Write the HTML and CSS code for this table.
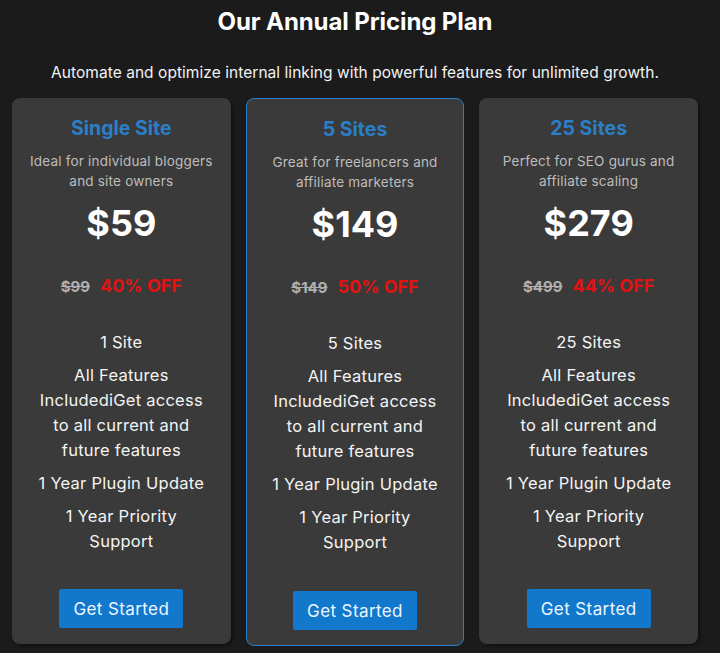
FILE: index.html
```html
<!DOCTYPE html>
<html lang="en">
<head>
<meta charset="utf-8">
<title>Our Annual Pricing Plan</title>
<link rel="stylesheet" href="styles.css">
</head>
<body>
<main class="pricing">
  <h1 class="pricing-title">Our Annual Pricing Plan</h1>
  <p class="pricing-sub">Automate and optimize internal linking with powerful features for unlimited growth.</p>
  <div class="plans">
    <section class="card">
      <h2 class="plan-name">Single Site</h2>
      <p class="plan-desc">Ideal for individual bloggers and site owners</p>
      <div class="price">$59</div>
      <div class="discount"><s class="old">$99</s><span class="off">40% OFF</span></div>
      <ul class="features">
        <li>1 Site</li>
        <li>All Features IncludediGet access to all current and future features</li>
        <li>1 Year Plugin Update</li>
        <li>1 Year Priority Support</li>
      </ul>
      <a class="btn" href="#">Get Started</a>
    </section>
    <section class="card card-featured">
      <h2 class="plan-name">5 Sites</h2>
      <p class="plan-desc">Great for freelancers and affiliate marketers</p>
      <div class="price">$149</div>
      <div class="discount"><s class="old">$149</s><span class="off">50% OFF</span></div>
      <ul class="features">
        <li>5 Sites</li>
        <li>All Features IncludediGet access to all current and future features</li>
        <li>1 Year Plugin Update</li>
        <li>1 Year Priority Support</li>
      </ul>
      <a class="btn" href="#">Get Started</a>
    </section>
    <section class="card">
      <h2 class="plan-name">25 Sites</h2>
      <p class="plan-desc">Perfect for SEO gurus and affiliate scaling</p>
      <div class="price">$279</div>
      <div class="discount"><s class="old">$499</s><span class="off">44% OFF</span></div>
      <ul class="features">
        <li>25 Sites</li>
        <li>All Features IncludediGet access to all current and future features</li>
        <li>1 Year Plugin Update</li>
        <li>1 Year Priority Support</li>
      </ul>
      <a class="btn" href="#">Get Started</a>
    </section>
  </div>
</main>
</body>
</html>
```
FILE: styles.css
```css
html, body {
  margin: 0;
  padding: 0;
  background: #1b1b1b;
  color: #fff;
  font-family: Inter, "Liberation Sans", sans-serif;
  overflow: hidden;
}
.pricing {
  width: 710px;
  height: 653px;
}
.pricing-title {
  margin: 0;
  padding-top: 8px;
  font-size: 24px;
  line-height: 28px;
  font-weight: 700;
  text-align: center;
  letter-spacing: -0.1px;
}
.pricing-sub {
  margin: 26px 0 0;
  font-size: 15.5px;
  line-height: 22px;
  text-align: center;
  color: #f2f2f2;
  letter-spacing: 0.05px;
}
.plans {
  display: flex;
  align-items: flex-start;
  gap: 15px;
  padding: 0 12px;
  margin-top: 14px;
}
.card {
  box-sizing: border-box;
  width: 219px;
  height: 546px;
  background: #3a3a3a;
  border-radius: 8px;
  box-shadow: 2px 2px 3px rgba(0,0,0,0.35);
  padding: 18px 10px 16px;
  text-align: center;
  display: flex;
  flex-direction: column;
  align-items: center;
}
.card-featured {
  height: 548px;
  border: 1.5px solid #2a80cc;
  padding-top: 17.5px;
  padding-bottom: 15px;
  box-shadow: none;
}
.plan-name {
  margin: 0;
  font-size: 19.5px;
  line-height: 24px;
  font-weight: 700;
  color: #2a7fc8;
}
.plan-desc {
  margin: 11px 0 0;
  font-size: 13.5px;
  line-height: 20px;
  color: #bdbdbd;
  max-width: 196px;
  letter-spacing: 0.2px;
}
.price {
  margin-top: 10px;
  font-size: 36px;
  line-height: 44px;
  font-weight: 700;
  color: #fff;
}
.discount {
  margin-top: 29px;
  line-height: 24px;
  display: flex;
  align-items: baseline;
  gap: 10px;
}
.old {
  font-size: 15px;
  font-weight: 700;
  color: #b0b0b0;
}
.off {
  font-size: 18px;
  font-weight: 700;
  color: #e31212;
}
.features {
  list-style: none;
  margin: 31px 0 0;
  padding: 0;
  width: 170px;
  font-size: 16.5px;
  line-height: 25px;
  color: #f4f4f4;
  letter-spacing: 0.25px;
}
.features li + li {
  margin-top: 8px;
}
.btn {
  margin-top: auto;
  display: flex;
  align-items: center;
  justify-content: center;
  width: 124px;
  height: 39px;
  background: #1178cc;
  color: #eef6ff;
  text-decoration: none;
  font-size: 17px;
  letter-spacing: 0.4px;
  border-radius: 2px;
}
```
